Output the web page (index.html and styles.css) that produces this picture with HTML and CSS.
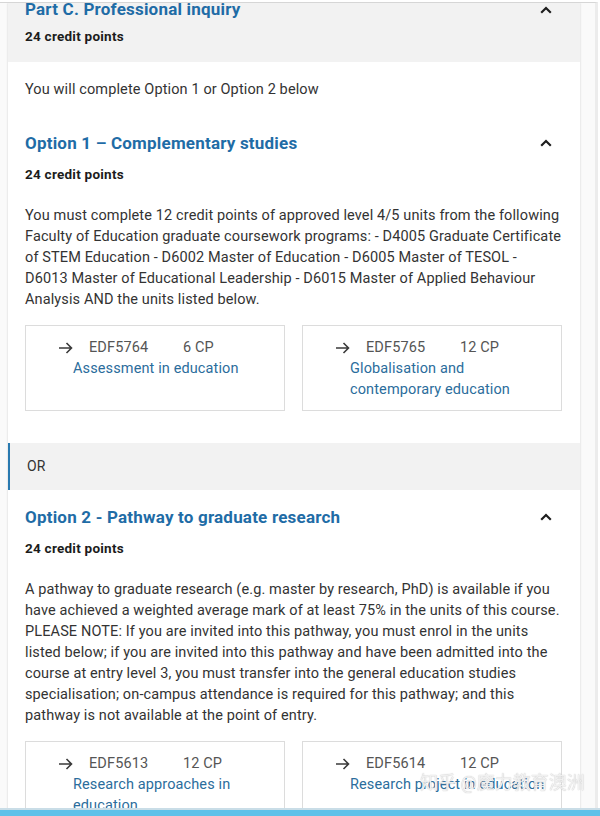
FILE: index.html
```html
<!DOCTYPE html>
<html lang="en">
  <head>
    <meta charset="UTF-8" />
    <meta name="viewport" content="width=device-width, initial-scale=1.0" />
    <title>Course structure - Part C</title>
    <link rel="stylesheet" href="styles.css">
  </head>

  <body>
    <div class="page">
      <div class="panel">
        <section class="part">
          <div class="part-head">
            <div class="title-row">
              <h2 class="part-title">Part C. Professional inquiry</h2>
              <svg class="chevron" width="12" height="8" viewBox="0 0 12 8"><path d="M1.2 6.8 L6 2 L10.8 6.8" /></svg>
            </div>
            <p class="credits">24 credit points</p>
          </div>

          <div class="part-body">
            <p class="intro">You will complete Option 1 or Option 2 below</p>

            <div class="option">
              <div class="title-row">
                <h3 class="option-title">Option 1 – Complementary studies</h3>
                <svg class="chevron" width="12" height="8" viewBox="0 0 12 8"><path d="M1.2 6.8 L6 2 L10.8 6.8" /></svg>
              </div>
              <p class="credits">24 credit points</p>
              <p class="desc">You must complete 12 credit points of approved level 4/5 units from the following Faculty of Education graduate coursework programs: - D4005 Graduate Certificate of STEM Education - D6002 Master of Education - D6005 Master of TESOL - D6013 Master of Educational Leadership - D6015 Master of Applied Behaviour Analysis AND the units listed below.</p>

              <div class="units">
                <a class="unit" href="#">
                  <div class="unit-row">
                    <svg class="arrow" width="15" height="12" viewBox="0 0 15 12"><path d="M1 6 H13.5 M8.5 1 L13.5 6 L8.5 11" /></svg>
                    <span class="unit-code">EDF5764</span>
                    <span class="unit-cp">6 CP</span>
                  </div>
                  <div class="unit-name">Assessment in education</div>
                </a>
                <a class="unit" href="#">
                  <div class="unit-row">
                    <svg class="arrow" width="15" height="12" viewBox="0 0 15 12"><path d="M1 6 H13.5 M8.5 1 L13.5 6 L8.5 11" /></svg>
                    <span class="unit-code">EDF5765</span>
                    <span class="unit-cp">12 CP</span>
                  </div>
                  <div class="unit-name">Globalisation and contemporary education</div>
                </a>
              </div>
            </div>
          </div>

          <div class="or">OR</div>

          <div class="part-body option-2">
            <div class="option">
              <div class="title-row">
                <h3 class="option-title">Option 2 - Pathway to graduate research</h3>
                <svg class="chevron" width="12" height="8" viewBox="0 0 12 8"><path d="M1.2 6.8 L6 2 L10.8 6.8" /></svg>
              </div>
              <p class="credits">24 credit points</p>
              <p class="desc">A pathway to graduate research (e.g. master by research, PhD) is available if you have achieved a weighted average mark of at least 75% in the units of this course. PLEASE NOTE: If you are invited into this pathway, you must enrol in the units listed below; if you are invited into this pathway and have been admitted into the course at entry level 3, you must transfer into the general education studies specialisation; on-campus attendance is required for this pathway; and this pathway is not available at the point of entry.</p>

              <div class="units">
                <a class="unit" href="#">
                  <div class="unit-row">
                    <svg class="arrow" width="15" height="12" viewBox="0 0 15 12"><path d="M1 6 H13.5 M8.5 1 L13.5 6 L8.5 11" /></svg>
                    <span class="unit-code">EDF5613</span>
                    <span class="unit-cp">12 CP</span>
                  </div>
                  <div class="unit-name">Research approaches in education</div>
                </a>
                <a class="unit" href="#">
                  <div class="unit-row">
                    <svg class="arrow" width="15" height="12" viewBox="0 0 15 12"><path d="M1 6 H13.5 M8.5 1 L13.5 6 L8.5 11" /></svg>
                    <span class="unit-code">EDF5614</span>
                    <span class="unit-cp">12 CP</span>
                  </div>
                  <div class="unit-name">Research project in education</div>
                </a>
              </div>
            </div>
          </div>
        </section>
      </div>
    </div>

    <div class="watermark">知乎 @魔力教育澳洲</div>
    <div class="bottom-bar"></div>
  </body>
</html>
```

FILE: styles.css
```css
body {
  margin: 0;
  background: #fff;
  font-family: Roboto, "Noto Sans CJK SC", sans-serif;
  color: #333;
}

p, h2, h3 {
  margin: 0;
}

.page {
  width: 595px;
  height: 816px;
  overflow: hidden;
  margin-top: 2px;
  border-top: 1px solid #d6d6d6;
  border-right: 3px solid #ececec;
  background: #fafafa;
}

.panel {
  width: 572px;
  margin-left: 8px;
  background: #fff;
  box-shadow: 0 0 2px rgba(0, 0, 0, 0.18);
}

.title-row {
  display: flex;
  align-items: center;
  justify-content: space-between;
}

.chevron {
  margin-right: 10px;
  fill: none;
  stroke: #1e1e1e;
  stroke-width: 2.2;
}

/* part header */
.part-head {
  background: #f2f2f2;
  padding: 0 18px 18px 17px;
}

.part-title,
.option-title {
  font-size: 17px;
  font-weight: 700;
  color: #1f6ca6;
  letter-spacing: 0.2px;
}

.part-title {
  line-height: 13px;
}

.option-title {
  line-height: 22px;
}

.credits {
  margin-top: 12px;
  font-size: 13.5px;
  line-height: 16px;
  font-weight: 700;
  letter-spacing: 0.25px;
  color: #1c1c1c;
}

/* part body */
.part-body {
  padding: 16px 18px 32px 17px;
}

.option-2 {
  padding-top: 16px;
}

.intro,
.desc {
  font-size: 14.5px;
  line-height: 21px;
  letter-spacing: 0.12px;
  color: #333;
}

.intro {
  margin-top: 1px;
}

.intro + .option {
  margin-top: 32px;
}

.desc {
  margin-top: 23px;
}

.units {
  display: grid;
  grid-template-columns: 1fr 1fr;
  gap: 17px;
  margin-top: 15px;
}

.unit {
  display: block;
  border: 1px solid #dcdcdc;
  padding: 11px 16px 10px 32px;
  text-decoration: none;
}

.unit-row {
  display: flex;
  align-items: center;
  font-size: 14.5px;
  line-height: 21px;
  letter-spacing: 0.12px;
  color: #555;
}

.arrow {
  margin-right: 16px;
  fill: none;
  stroke: #3a3a3a;
  stroke-width: 1.6;
}

.unit-code {
  width: 94px;
}

.unit-name {
  margin-left: 15px;
  font-size: 14.5px;
  line-height: 21px;
  letter-spacing: 0.12px;
  color: #2b6d9c;
}

/* divider */
.or {
  background: #f2f2f2;
  border-left: 2px solid #2a7ab0;
  padding: 15px 17px;
  font-size: 14px;
  line-height: 17px;
  color: #333;
}

.watermark {
  position: fixed;
  left: 420px;
  top: 772px;
  font-size: 18px;
  line-height: 22px;
  color: rgba(255, 255, 255, 0.8);
  text-shadow: 0 0 1px #a8a8a8;
}

.bottom-bar {
  position: fixed;
  left: 0;
  right: 0;
  bottom: 0;
  height: 6px;
  background: #5fc1e9;
  border-top: 2px solid #c9dde7;
}
```
